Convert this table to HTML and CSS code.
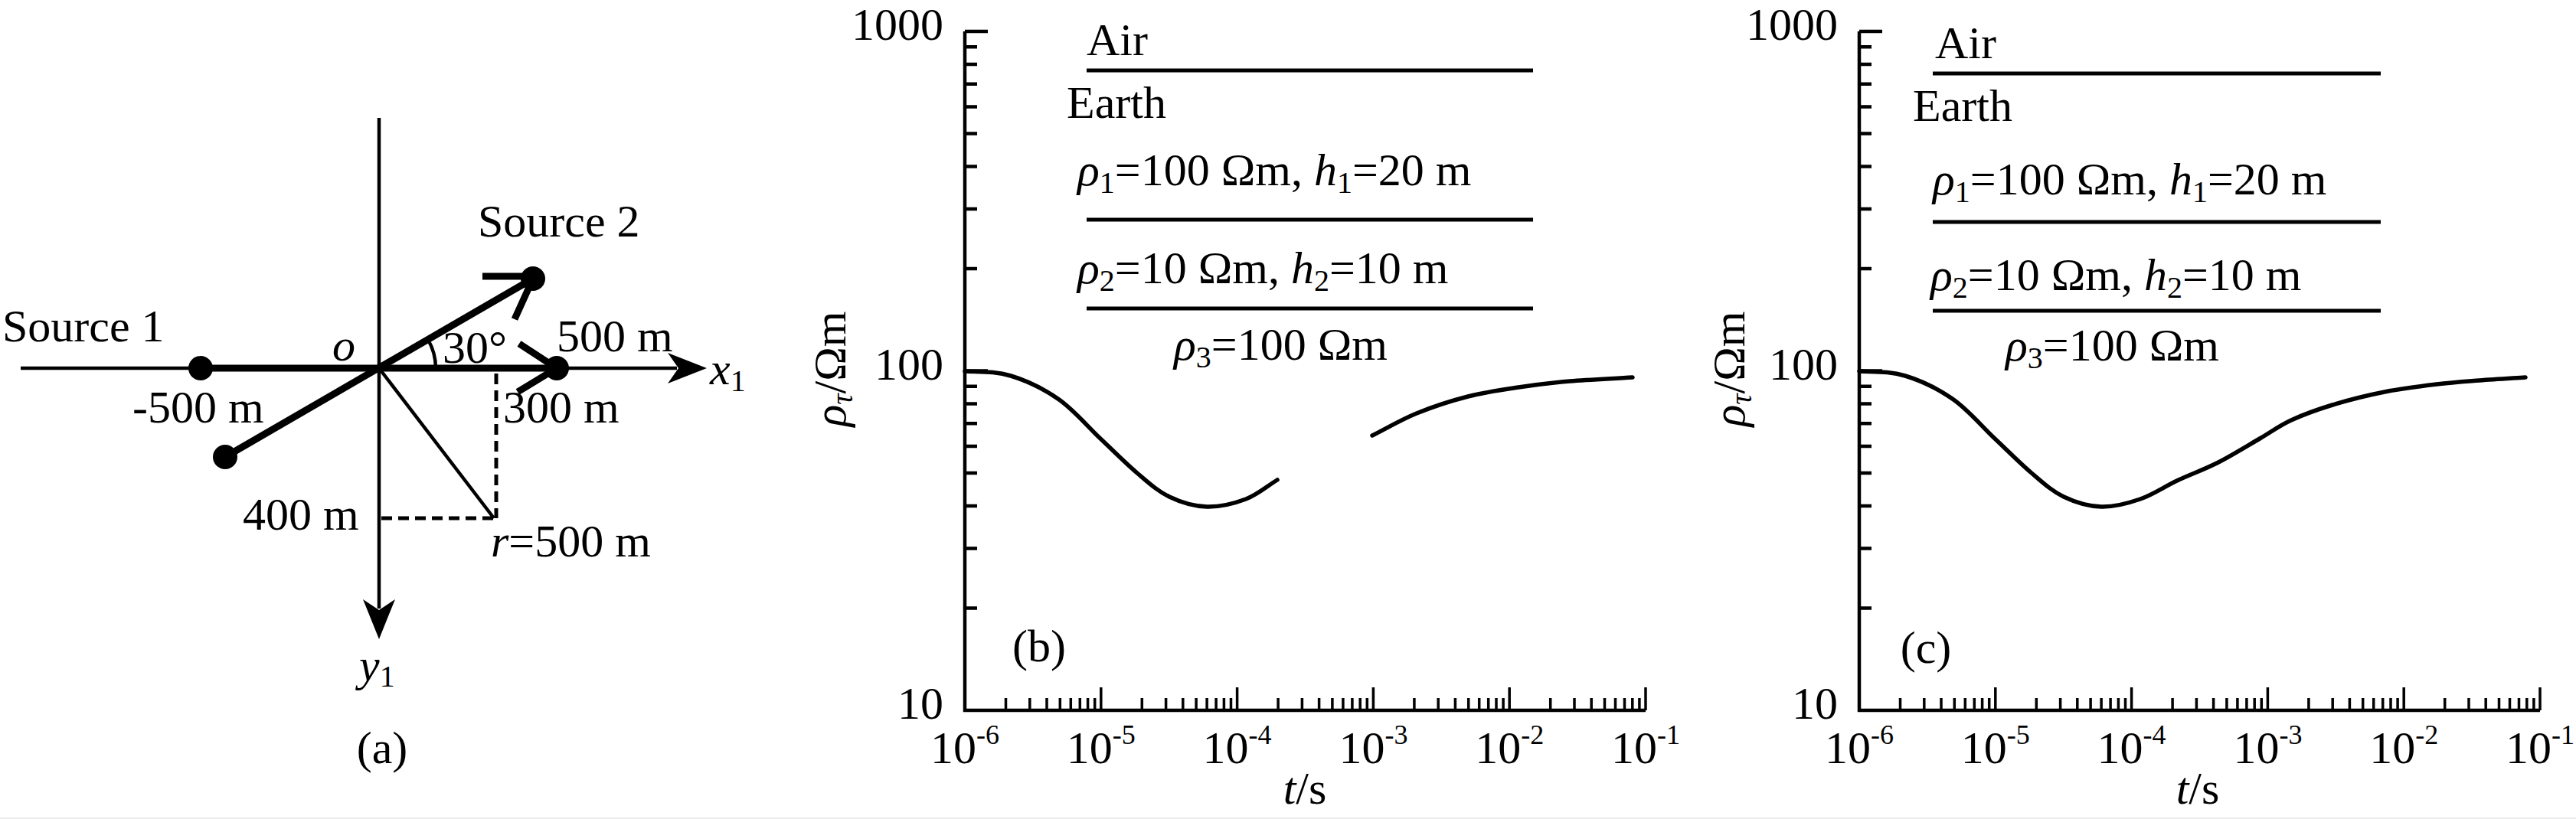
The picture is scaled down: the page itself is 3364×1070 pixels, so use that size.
FILE: index.html
```html
<!DOCTYPE html>
<html lang="en">
<head>
<meta charset="utf-8">
<title>TEM figure</title>
<link rel="stylesheet" href="styles.css">
</head>
<body>
<main class="figure">

<svg class="panel panel-a" viewBox="0 0 1030 1068" xmlns="http://www.w3.org/2000/svg">
  <line class="axis" x1="27" y1="481" x2="884" y2="481"/>
  <polygon class="fill" points="923,481 872,461 886,481 872,501"/>
  <line class="axis" x1="495" y1="154" x2="495" y2="795"/>
  <polygon class="fill" points="495,835 474,783 495,797 516,783"/>

  <line class="thin" x1="495" y1="481" x2="645" y2="677"/>
  <line class="dash" x1="648" y1="488" x2="648" y2="677"/>
  <line class="dash" x1="498" y1="677" x2="650" y2="677"/>
  <path class="thin" d="M569,481 A74,74 0 0 0 559.1,444"/>

  <line class="thick" x1="262" y1="481" x2="727" y2="481"/>
  <line class="thick" x1="294" y1="597" x2="696" y2="364"/>
  <line class="thick" x1="727" y1="481" x2="678" y2="449"/>
  <line class="thick" x1="727" y1="481" x2="676" y2="512"/>
  <line class="thick" x1="696" y1="361" x2="630" y2="361"/>
  <line class="thick" x1="696" y1="364" x2="672" y2="417"/>
  <circle class="fill" cx="262" cy="481" r="16"/>
  <circle class="fill" cx="727" cy="481" r="16"/>
  <circle class="fill" cx="294" cy="597" r="16"/>
  <circle class="fill" cx="696" cy="364" r="16"/>

  <text x="3" y="446">Source 1</text>
  <text x="624" y="309">Source 2</text>
  <text class="it" x="434" y="471">o</text>
  <text x="578" y="474">30°</text>
  <text x="727" y="459">500 m</text>
  <text x="173" y="552">-500 m</text>
  <text x="657" y="552">300 m</text>
  <text x="927" y="502"><tspan class="it">x</tspan><tspan class="sub" dy="9">1</tspan></text>
  <text x="317" y="692">400 m</text>
  <text x="641" y="727"><tspan class="it">r</tspan>=500 m</text>
  <text x="469" y="889"><tspan class="it">y</tspan><tspan class="sub" dy="8">1</tspan></text>
  <text class="mid" x="499" y="997">(a)</text>
</svg>

<svg class="panel panel-b" viewBox="0 0 1168 1068" xmlns="http://www.w3.org/2000/svg">
  <path class="curve" d="M230,485 C250,486 269.5,484.8 290,491 C310.5,497.2 333.5,508.3 353,522 C372.5,535.7 390,557 407,573 C424,589 440,605.3 455,618 C470,630.7 481.8,641.7 497,649 C512.2,656.3 529.3,661.5 546,662 C562.7,662.5 581.7,657.8 597,652 C612.3,646.2 624.3,635.3 638,627"/>
  <path class="curve" d="M762,569 C781.3,559.3 799.2,548.5 820,540 C840.8,531.5 864.8,523.7 887,518 C909.2,512.3 930.8,509.3 953,506 C975.2,502.7 995.2,500.2 1020,498 C1044.8,495.8 1074.7,494.7 1102,493"/>

  <path class="axis" d="M230,41 V928 H1119"/>
  <path class="ytick" d="M230,41h30M230,484.5h30M230,61.3h16M230,84h16M230,109.7h16M230,139.4h16M230,174.5h16M230,217.5h16M230,272.9h16M230,351h16M230,504.8h16M230,527.5h16M230,553.2h16M230,582.9h16M230,618h16M230,661h16M230,716.4h16M230,794.5h16"/>
  <path class="xtick" d="M407.8,928v-30M585.6,928v-30M763.4,928v-30M941.2,928v-30M1119,928v-30M283.5,928v-16M314.8,928v-16M337,928v-16M354.3,928v-16M368.3,928v-16M380.3,928v-16M390.6,928v-16M399.7,928v-16M461.3,928v-16M492.6,928v-16M514.8,928v-16M532.1,928v-16M546.1,928v-16M558.1,928v-16M568.4,928v-16M577.5,928v-16M639.1,928v-16M670.4,928v-16M692.6,928v-16M709.9,928v-16M723.9,928v-16M735.9,928v-16M746.2,928v-16M755.3,928v-16M816.9,928v-16M848.2,928v-16M870.4,928v-16M887.7,928v-16M901.7,928v-16M913.7,928v-16M924,928v-16M933.1,928v-16M994.7,928v-16M1026,928v-16M1048.2,928v-16M1065.5,928v-16M1079.5,928v-16M1091.5,928v-16M1101.8,928v-16M1110.9,928v-16"/>

  <text class="end" x="202" y="52">1000</text>
  <text class="end" x="202" y="496">100</text>
  <text class="end" x="202" y="939">10</text>

  <text class="mid" x="230" y="997">10<tspan class="sup" dy="-25">-6</tspan></text>
  <text class="mid" x="407.8" y="997">10<tspan class="sup" dy="-25">-5</tspan></text>
  <text class="mid" x="585.6" y="997">10<tspan class="sup" dy="-25">-4</tspan></text>
  <text class="mid" x="763.4" y="997">10<tspan class="sup" dy="-25">-3</tspan></text>
  <text class="mid" x="941.2" y="997">10<tspan class="sup" dy="-25">-2</tspan></text>
  <text class="mid" x="1119" y="997">10<tspan class="sup" dy="-25">-1</tspan></text>
  <text class="mid" x="674" y="1050"><tspan class="it">t</tspan>/s</text>
  <text class="mid" transform="translate(74,482) rotate(-90)"><tspan class="it">ρ</tspan><tspan class="sub it" dy="9">τ</tspan><tspan dy="-9">/Ωm</tspan></text>
  <text class="mid" x="327" y="864">(b)</text>

  <line class="layer" x1="389" y1="92" x2="972" y2="92"/>
  <line class="layer" x1="389" y1="287" x2="972" y2="287"/>
  <line class="layer" x1="389" y1="403" x2="972" y2="403"/>
  <text x="389" y="72">Air</text>
  <text x="363" y="154">Earth</text>
  <text x="377" y="242"><tspan class="it">ρ</tspan><tspan class="sub" dy="10">1</tspan><tspan dy="-10">=100 Ωm, </tspan><tspan class="it">h</tspan><tspan class="sub" dy="10">1</tspan><tspan dy="-10">=20 m</tspan></text>
  <text x="377" y="370"><tspan class="it">ρ</tspan><tspan class="sub" dy="10">2</tspan><tspan dy="-10">=10 Ωm, </tspan><tspan class="it">h</tspan><tspan class="sub" dy="10">2</tspan><tspan dy="-10">=10 m</tspan></text>
  <text x="503" y="470"><tspan class="it">ρ</tspan><tspan class="sub" dy="10">3</tspan><tspan dy="-10">=100 Ωm</tspan></text>
</svg>

<svg class="panel panel-c" viewBox="0 0 1166 1068" xmlns="http://www.w3.org/2000/svg">
  <path class="curve" d="M230,485 C250,486 269.5,484.8 290,491 C310.5,497.2 333.5,508.3 353,522 C372.5,535.7 390,557 407,573 C424,589 440,605.3 455,618 C470,630.7 481.8,641.7 497,649 C512.2,656.3 529.3,661.5 546,662 C562.7,662.5 580.5,657.7 597,652 C613.5,646.3 628,636 645,628 C662,620 681,613.2 699,604 C717,594.8 737.2,582.2 753,573 C768.8,563.8 778.2,556.3 794,549 C809.8,541.7 827.7,535.2 848,529 C868.3,522.8 893.3,516.5 916,512 C938.7,507.5 963.3,504.5 984,502 C1004.7,499.5 1020.7,498.5 1040,497 C1059.3,495.5 1080,494.3 1100,493"/>

  <path class="axis" d="M230,41 V928 H1119"/>
  <path class="ytick" d="M230,41h30M230,484.5h30M230,61.3h16M230,84h16M230,109.7h16M230,139.4h16M230,174.5h16M230,217.5h16M230,272.9h16M230,351h16M230,504.8h16M230,527.5h16M230,553.2h16M230,582.9h16M230,618h16M230,661h16M230,716.4h16M230,794.5h16"/>
  <path class="xtick" d="M407.8,928v-30M585.6,928v-30M763.4,928v-30M941.2,928v-30M1119,928v-30M283.5,928v-16M314.8,928v-16M337,928v-16M354.3,928v-16M368.3,928v-16M380.3,928v-16M390.6,928v-16M399.7,928v-16M461.3,928v-16M492.6,928v-16M514.8,928v-16M532.1,928v-16M546.1,928v-16M558.1,928v-16M568.4,928v-16M577.5,928v-16M639.1,928v-16M670.4,928v-16M692.6,928v-16M709.9,928v-16M723.9,928v-16M735.9,928v-16M746.2,928v-16M755.3,928v-16M816.9,928v-16M848.2,928v-16M870.4,928v-16M887.7,928v-16M901.7,928v-16M913.7,928v-16M924,928v-16M933.1,928v-16M994.7,928v-16M1026,928v-16M1048.2,928v-16M1065.5,928v-16M1079.5,928v-16M1091.5,928v-16M1101.8,928v-16M1110.9,928v-16"/>

  <text class="end" x="202" y="52">1000</text>
  <text class="end" x="202" y="496">100</text>
  <text class="end" x="202" y="939">10</text>

  <text class="mid" x="230" y="997">10<tspan class="sup" dy="-25">-6</tspan></text>
  <text class="mid" x="407.8" y="997">10<tspan class="sup" dy="-25">-5</tspan></text>
  <text class="mid" x="585.6" y="997">10<tspan class="sup" dy="-25">-4</tspan></text>
  <text class="mid" x="763.4" y="997">10<tspan class="sup" dy="-25">-3</tspan></text>
  <text class="mid" x="941.2" y="997">10<tspan class="sup" dy="-25">-2</tspan></text>
  <text class="mid" x="1119" y="997">10<tspan class="sup" dy="-25">-1</tspan></text>
  <text class="mid" x="672" y="1050"><tspan class="it">t</tspan>/s</text>
  <text class="mid" transform="translate(80,482) rotate(-90)"><tspan class="it">ρ</tspan><tspan class="sub it" dy="9">τ</tspan><tspan dy="-9">/Ωm</tspan></text>
  <text class="mid" x="317" y="866">(c)</text>

  <line class="layer" x1="326" y1="96" x2="911" y2="96"/>
  <line class="layer" x1="326" y1="290" x2="911" y2="290"/>
  <line class="layer" x1="326" y1="406" x2="911" y2="406"/>
  <text x="329" y="76">Air</text>
  <text x="300" y="158">Earth</text>
  <text x="326" y="254"><tspan class="it">ρ</tspan><tspan class="sub" dy="10">1</tspan><tspan dy="-10">=100 Ωm, </tspan><tspan class="it">h</tspan><tspan class="sub" dy="10">1</tspan><tspan dy="-10">=20 m</tspan></text>
  <text x="323" y="379"><tspan class="it">ρ</tspan><tspan class="sub" dy="10">2</tspan><tspan dy="-10">=10 Ωm, </tspan><tspan class="it">h</tspan><tspan class="sub" dy="10">2</tspan><tspan dy="-10">=10 m</tspan></text>
  <text x="421" y="471"><tspan class="it">ρ</tspan><tspan class="sub" dy="10">3</tspan><tspan dy="-10">=100 Ωm</tspan></text>
</svg>

</main>
</body>
</html>
```

FILE: styles.css
```css
html, body {
  margin: 0;
  padding: 0;
  background: #ffffff;
}

.figure {
  display: flex;
  flex-direction: row;
  align-items: flex-start;
  width: 3364px;
  height: 1068px;
  border-bottom: 2px solid #ececec;
  overflow: hidden;
}

.panel {
  display: block;
  flex: none;
  height: 1068px;
}

.panel-a { width: 1030px; }
.panel-b { width: 1168px; }
.panel-c { width: 1166px; }

.panel text {
  font-family: "Liberation Serif", "Times New Roman", serif;
  font-size: 60px;
  fill: #000;
}

.panel .it { font-style: italic; }
.panel .sub { font-size: 40px; }
.panel .sup { font-size: 36px; }
.panel .mid { text-anchor: middle; }
.panel .end { text-anchor: end; }

.axis {
  fill: none;
  stroke: #000;
  stroke-width: 4.5;
  stroke-linejoin: miter;
}

.fill {
  fill: #000;
  stroke: none;
}

.thin {
  fill: none;
  stroke: #000;
  stroke-width: 4.5;
}

.thick {
  stroke: #000;
  stroke-width: 9;
  stroke-linecap: butt;
}

.dash {
  stroke: #000;
  stroke-width: 5;
  stroke-dasharray: 14 8;
}

.ytick {
  fill: none;
  stroke: #000;
  stroke-width: 4.5;
}

.xtick {
  fill: none;
  stroke: #000;
  stroke-width: 3.5;
}

.layer {
  stroke: #000;
  stroke-width: 5;
}

.curve {
  fill: none;
  stroke: #000;
  stroke-width: 5.5;
  stroke-linecap: round;
  stroke-linejoin: round;
}
```
